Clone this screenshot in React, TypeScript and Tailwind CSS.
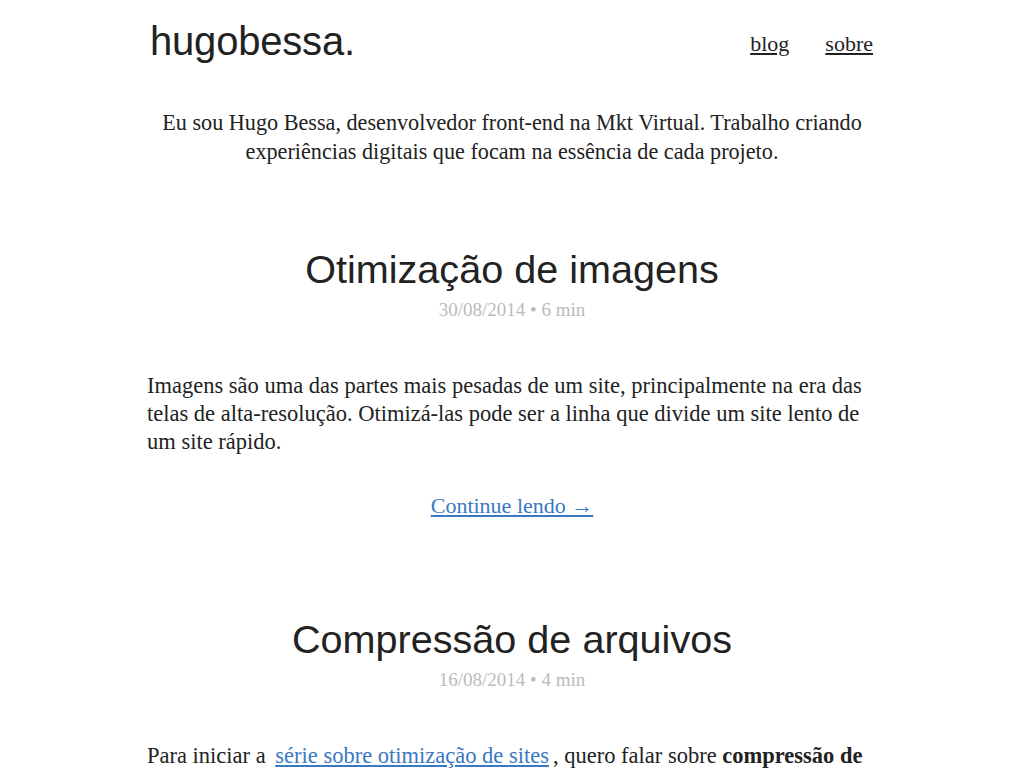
import React from "react";

const serif = { fontFamily: '"Liberation Serif", "DejaVu Serif", serif' };
const sans = { fontFamily: '"Liberation Sans", Arial, sans-serif' };

export default function App() {
  return (
    <div className="min-h-screen bg-white text-[#222]" style={serif}>
      <div className="mx-auto w-[730px]">
        <header className="flex items-center justify-between pt-[18px]">
          <a className="pl-[3px] text-[40px] leading-[46px] text-[#222] tracking-[-0.2px]" style={sans}>
            hugobessa.
          </a>
          <nav className="flex gap-[36px] pr-[4px] pt-[5px] text-[22px]">
            <a className="underline text-[#222]">blog</a>
            <a className="underline text-[#222]">sobre</a>
          </nav>
        </header>

        <p className="mt-[44px] px-[4px] text-center text-[22.2px] leading-[29px]">
          Eu sou Hugo Bessa, desenvolvedor front-end na Mkt Virtual. Trabalho criando experiências digitais que focam na essência de cada projeto.
        </p>

        <article className="mt-[80px]">
          <h2 className="text-center text-[39.6px] leading-[46px] text-[#222]" style={sans}>
            Otimização de imagens
          </h2>
          <div className="mt-[6px] text-center text-[19px] leading-[24px] text-[#bbb]">30/08/2014 • 6 min</div>
          <p className="mt-[50px] text-[22.5px] leading-[28px]">
            Imagens são uma das partes mais pesadas de um site, principalmente na era das telas de alta-resolução. Otimizá-las pode ser a linha que divide um site lento de um site rápido.
          </p>
          <div className="mt-[36px] text-center text-[22px] leading-[28px]">
            <a className="text-[#3a78c3] underline">Continue lendo →</a>
          </div>
        </article>

        <article className="mt-[96px]">
          <h2 className="text-center text-[39.6px] leading-[46px] text-[#222]" style={sans}>
            Compressão de arquivos
          </h2>
          <div className="mt-[6px] text-center text-[19px] leading-[24px] text-[#bbb]">16/08/2014 • 4 min</div>
          <p className="mt-[50px] text-[22.5px] leading-[28px]">
            Para iniciar a <a className="mx-[4px] text-[#3a78c3] underline">série sobre otimização de sites</a>, quero falar sobre <strong>compressão de arquivos</strong> e como ela pode reduzir drasticamente o tamanho das páginas.
          </p>
        </article>
      </div>
    </div>
  );
}
